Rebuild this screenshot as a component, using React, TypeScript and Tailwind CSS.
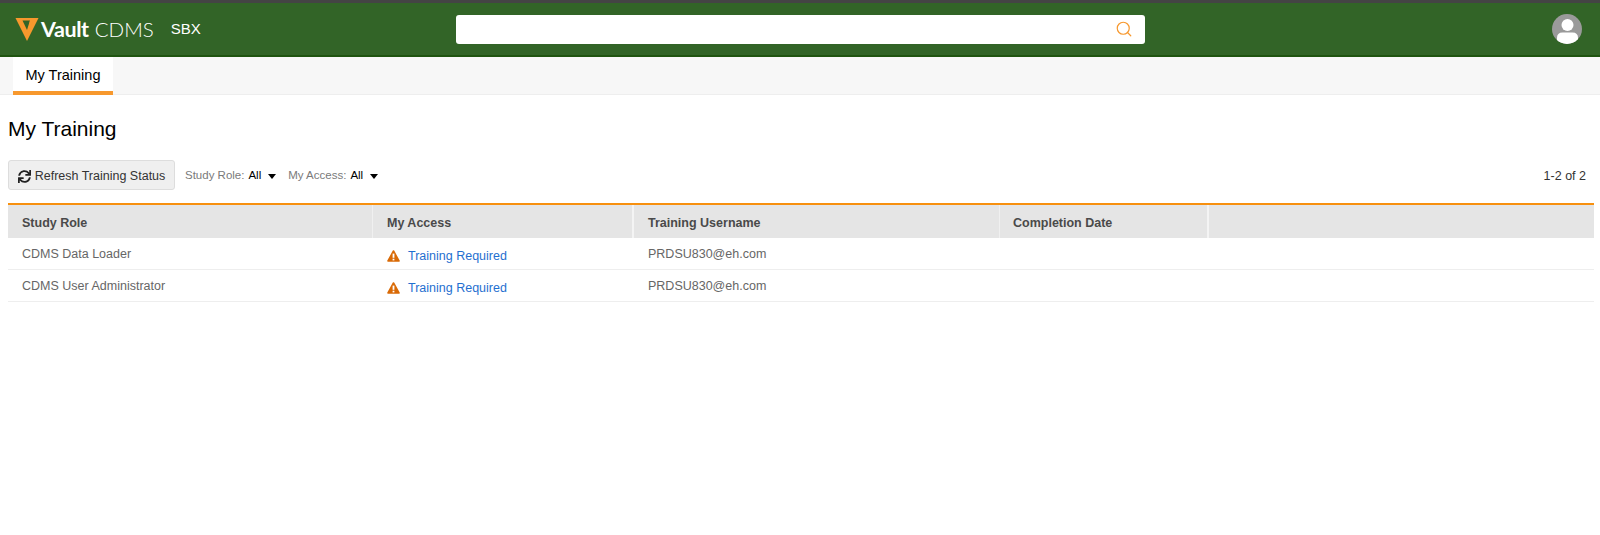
import { Search } from 'lucide-react';
import { FaSync } from 'react-icons/fa';

const rows = [
  { role: 'CDMS Data Loader', access: 'Training Required', username: 'PRDSU830@eh.com' },
  { role: 'CDMS User Administrator', access: 'Training Required', username: 'PRDSU830@eh.com' },
];

function Caret() {
  return <span className="ml-[7px] h-0 w-0 border-x-[4.5px] border-t-[5px] border-x-transparent border-t-black" />;
}

function Warning() {
  return (
    <svg width="13" height="12" viewBox="0 0 13 12" className="shrink-0">
      <path d="M6.5 1 L12 11 L1 11 Z" fill="#d96a06" stroke="#d96a06" strokeWidth="1.6" strokeLinejoin="round" />
      <rect x="5.6" y="3.6" width="1.8" height="4.2" fill="#fff" />
      <rect x="5.6" y="8.7" width="1.8" height="1.7" fill="#fff" />
    </svg>
  );
}

export default function App() {
  return (
    <div className="min-h-[535px] bg-white font-['Liberation_Sans',Arial,sans-serif]">
      {/* Header */}
      <header className="flex h-[57px] items-center border-t-[3px] border-b-2 border-t-[#444444] border-b-[#1f5410] bg-[#326427] pr-[18px] pl-[15px]">
        <div className="flex w-[441px] items-center">
          <svg width="24" height="24" viewBox="0 0 24 24" className="shrink-0">
            <path d="M0.5 1 H23.5 L12 24 Z" fill="#f7982d" />
            <path d="M7.5 3.5 H15 L12 13 Z" fill="#326427" />
            <path d="M15 3.5 H18.5 L12 18 Z" fill="#f7982d" />
          </svg>
          <span className="ml-[2px] font-['Lato',sans-serif] text-[21.5px] font-bold tracking-[-0.4px] text-white">Vault</span>
          <span className="ml-[6px] font-['Lato',sans-serif] text-[20.5px] font-light text-white">CDMS</span>
          <span className="ml-[17px] text-[15px] text-white">SBX</span>
        </div>
        <div className="flex h-[29px] w-[689px] items-center justify-end rounded-[3px] bg-white pr-[12px]">
          <Search size={18} strokeWidth={1.6} className="text-[#f7982d]" />
        </div>
        <div className="ml-auto flex h-[30px] w-[30px] items-end justify-center overflow-hidden rounded-full bg-[#9a9a9a]">
          <svg width="21" height="27" viewBox="0 0 21 27">
            <circle cx="10.5" cy="8" r="6" fill="#fff" />
            <path d="M0 27 V21 Q0 15.5 5.5 15.5 H15.5 Q21 15.5 21 21 V27 Z" fill="#fff" />
          </svg>
        </div>
      </header>

      {/* Tabs */}
      <nav className="flex h-[38px] border-b border-[#eeeeee] bg-[#f7f7f7] pl-[13px]">
        <div className="flex h-[38px] w-[100px] items-center justify-center border-b-4 border-[#f7982d] bg-white pt-[3px] text-[14.5px] text-black">
          My Training
        </div>
      </nav>

      <main className="px-[8px]">
        <h1 className="mt-[21px] text-[21px] leading-[26px] text-black">My Training</h1>

        {/* Toolbar */}
        <div className="mt-[18px] flex items-center">
          <button className="flex h-[30px] w-[167px] items-center justify-center gap-[4px] rounded-[3px] border border-[#dddddd] bg-[#efefef] pt-[2px] text-[12.5px] text-[#333333]">
            <FaSync size={13} className="text-[#222222]" />
            Refresh Training Status
          </button>
          <div className="ml-[10px] flex items-center pt-[2px] text-[11.5px]">
            <span className="text-[#7a7a7a]">Study Role:</span>
            <span className="ml-[4px] text-black">All</span>
            <Caret />
          </div>
          <div className="ml-[12px] flex items-center pt-[2px] text-[11.5px]">
            <span className="text-[#7a7a7a]">My Access:</span>
            <span className="ml-[4px] text-black">All</span>
            <Caret />
          </div>
          <span className="mr-[6px] ml-auto pt-[2px] text-[12.5px] text-[#333333]">1-2 of 2</span>
        </div>

        {/* Table */}
        <div className="mt-[13px] w-[1586px] border-t-2 border-[#f7900f]">
          <div className="grid h-[33px] grid-cols-[365px_261px_366px_209px_1fr] bg-[#e5e5e5] text-[12.5px] font-bold text-[#4a4a4a]">
            <div className="flex items-center border-r border-[#f0f0f0] pt-[4px] pl-[14px]">Study Role</div>
            <div className="flex items-center border-r-2 border-[#f4f4f4] pt-[4px] pl-[14px]">My Access</div>
            <div className="flex items-center border-r border-[#f0f0f0] pt-[4px] pl-[14px]">Training Username</div>
            <div className="flex items-center border-r-2 border-[#f4f4f4] pt-[4px] pl-[13px]">Completion Date</div>
            <div />
          </div>
          {rows.map((row) => (
            <div key={row.role} className="grid h-[32px] grid-cols-[365px_261px_366px_209px_1fr] border-b border-[#eeeeee] text-[12.5px] text-[#666666]">
              <div className="flex items-center pt-[2px] pl-[14px]">{row.role}</div>
              <div className="flex items-center gap-[8px] pt-[5px] pl-[14px]">
                <Warning />
                <span className="text-[#1f6fd0]">{row.access}</span>
              </div>
              <div className="flex items-center pt-[2px] pl-[14px]">{row.username}</div>
              <div />
              <div />
            </div>
          ))}
        </div>
      </main>
    </div>
  );
}
